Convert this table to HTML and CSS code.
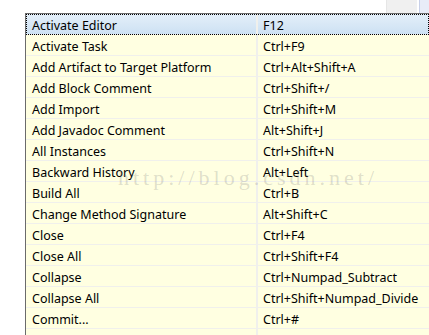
FILE: index.html
```html
<!DOCTYPE html>
<html>
<head>
    <meta charset="UTF-8">
    <title>Keys</title>
    <link rel="stylesheet" href="styles.css">
</head>
<body>
    <div class="topbar">
        <div class="scroll-box"></div>
        <div class="scroll-edge"></div>
    </div>
    <div class="keys">
        <div class="row selected"><span class="cmd">Activate Editor</span><span class="key">F12</span></div>
        <div class="row"><span class="cmd">Activate Task</span><span class="key">Ctrl+F9</span></div>
        <div class="row"><span class="cmd">Add Artifact to Target Platform</span><span class="key">Ctrl+Alt+Shift+A</span></div>
        <div class="row"><span class="cmd">Add Block Comment</span><span class="key">Ctrl+Shift+/</span></div>
        <div class="row"><span class="cmd">Add Import</span><span class="key">Ctrl+Shift+M</span></div>
        <div class="row"><span class="cmd">Add Javadoc Comment</span><span class="key">Alt+Shift+J</span></div>
        <div class="row"><span class="cmd">All Instances</span><span class="key">Ctrl+Shift+N</span></div>
        <div class="row"><span class="cmd">Backward History</span><span class="key">Alt+Left</span></div>
        <div class="row"><span class="cmd">Build All</span><span class="key">Ctrl+B</span></div>
        <div class="row"><span class="cmd">Change Method Signature</span><span class="key">Alt+Shift+C</span></div>
        <div class="row"><span class="cmd">Close</span><span class="key">Ctrl+F4</span></div>
        <div class="row"><span class="cmd">Close All</span><span class="key">Ctrl+Shift+F4</span></div>
        <div class="row"><span class="cmd">Collapse</span><span class="key">Ctrl+Numpad_Subtract</span></div>
        <div class="row"><span class="cmd">Collapse All</span><span class="key">Ctrl+Shift+Numpad_Divide</span></div>
        <div class="row"><span class="cmd">Commit...</span><span class="key">Ctrl+#</span></div>
        <div class="row"><span class="cmd">Compare With Other</span><span class="key">Ctrl+Alt+C</span></div>
        <div class="watermark">http://blog.csdn.net/</div>
    </div>
</body>
</html>
```

FILE: styles.css
```css
body {
    margin: 0;
    padding: 0;
    background-color: #fff;
    font-family: "Noto Sans", sans-serif;
    font-size: 12.5px;
    color: #000;
    overflow: hidden;
}
.topbar {
    height: 13px;
    display: flex;
    justify-content: flex-end;
}
.scroll-box {
    width: 30px;
    background-color: #f0f0f0;
    border-left: 1px solid #e6e6e6;
    margin-right: 2px;
}
.scroll-edge {
    width: 9px;
    background-color: #e8ecf8;
    border-left: 1px solid #c8d0e8;
}
.keys {
    position: relative;
    margin-left: 25px;
    border-top: 1px solid #6b6b6b;
    border-left: 1px solid #6b6b6b;
}
.row {
    display: flex;
    height: 20px;
    line-height: 24px;
    background-color: #ffffe1;
    border-bottom: 1px solid #f0f0ec;
}
.row.selected {
    background: linear-gradient(#e4eff9, #cde1f3);
    outline: 1px dotted #000;
    outline-offset: -1px;
}
.cmd {
    width: 224px;
    height: 20px;
    padding-left: 6px;
    border-right: 2px solid #f0f0ec;
    white-space: nowrap;
}
.key {
    padding-left: 5px;
    white-space: nowrap;
}
.watermark {
    position: absolute;
    left: 92px;
    top: 151px;
    font-family: "Liberation Serif", serif;
    font-size: 22px;
    letter-spacing: 4px;
    color: rgba(120, 120, 120, 0.24);
}
```
